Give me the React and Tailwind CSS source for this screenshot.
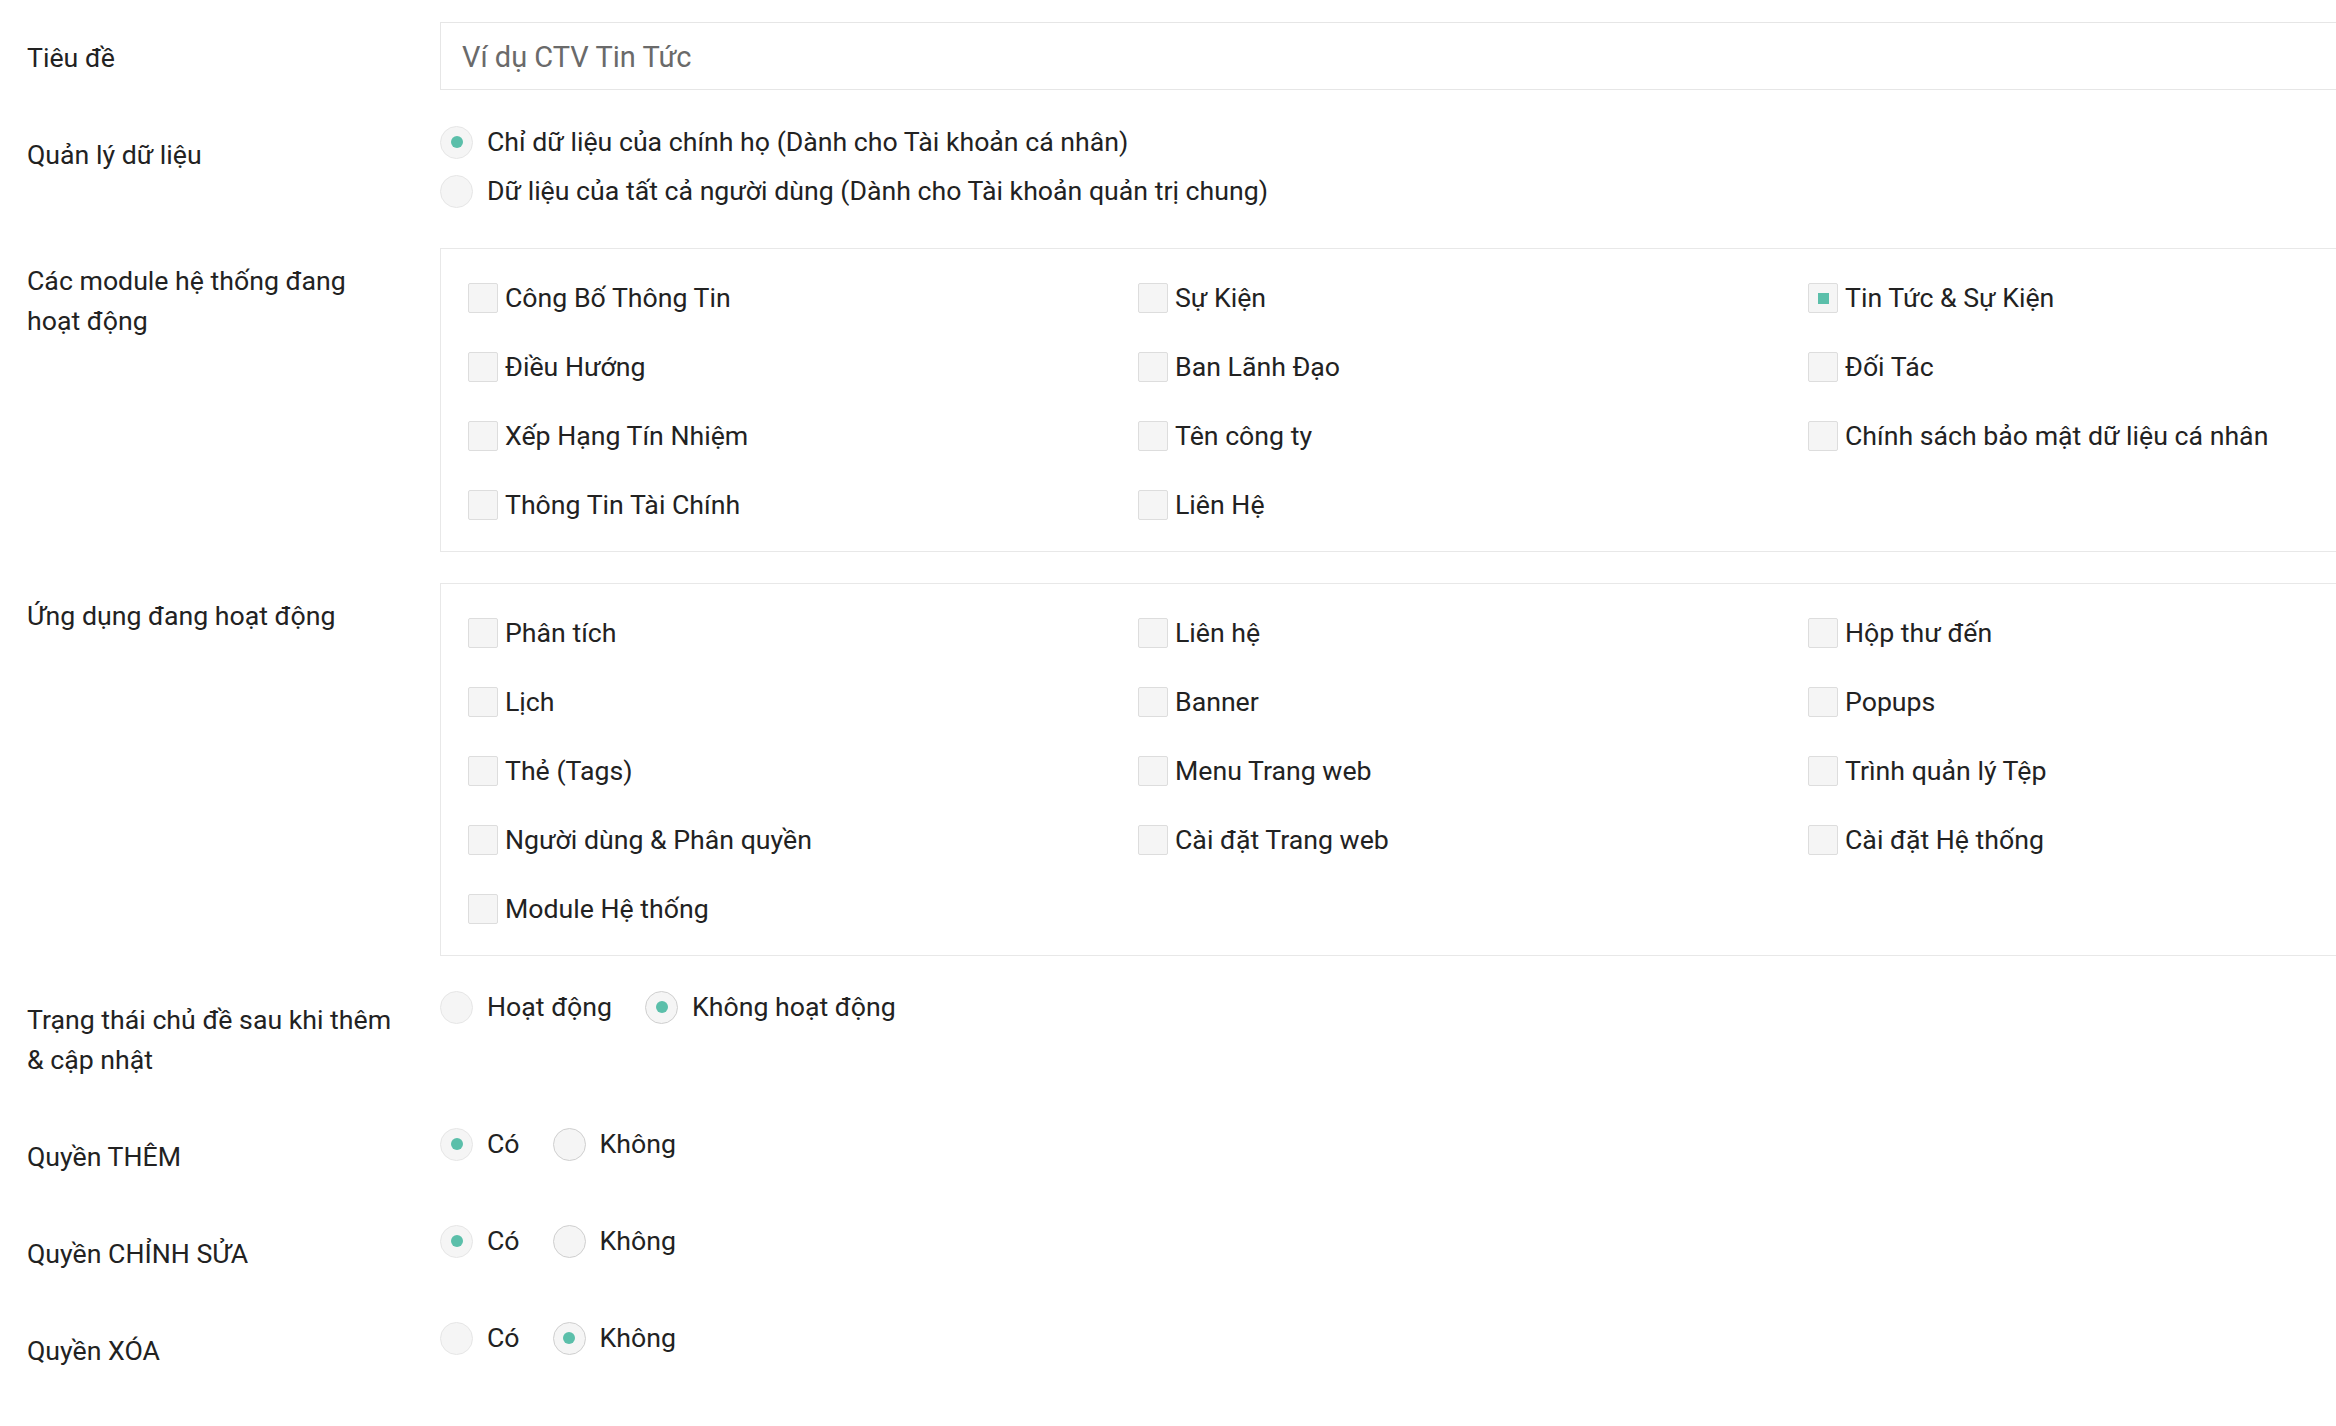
import React from "react";

const Radio = ({ checked, dark }) => (
  <span
    className={`flex h-[33px] w-[33px] shrink-0 items-center justify-center rounded-full border bg-[#f5f5f5] ${
      dark ? "border-[#cfcfcf]" : "border-[#e6e6e6]"
    }`}
  >
    {checked && <span className="h-[12px] w-[12px] rounded-full bg-[#5bbfaa]" />}
  </span>
);

const Check = ({ checked }) => (
  <span className="flex h-[30px] w-[30px] shrink-0 items-center justify-center rounded-[2px] border border-[#dddddd] bg-[#f5f5f5]">
    {checked && <span className="h-[11px] w-[11px] bg-[#5bbfaa]" />}
  </span>
);

const RadioOption = ({ label, checked, dark }) => (
  <label className="flex items-center gap-[14px]">
    <Radio checked={checked} dark={dark} />
    <span>{label}</span>
  </label>
);

const CheckOption = ({ label, checked }) => (
  <label className="flex items-center gap-[7px]">
    <Check checked={checked} />
    <span className="whitespace-nowrap">{label}</span>
  </label>
);

const Row = ({ label, children, labelPad = "pt-[13px]" }) => (
  <div className="flex">
    <div className={`w-[413px] shrink-0 pr-[42px] pb-[13px] ${labelPad}`}>{label}</div>
    <div className="w-[2040px] shrink-0">{children}</div>
  </div>
);

const CheckBox = ({ items }) => (
  <div className="grid grid-cols-[670px_670px_670px] gap-y-[29px] border border-[#e8e8e8] pl-[27px] pt-[29px] pb-[26px]">
    {items.map((it) => (
      <CheckOption key={it.label} label={it.label} checked={it.checked} />
    ))}
  </div>
);

const modules = [
  { label: "Công Bố Thông Tin" },
  { label: "Sự Kiện" },
  { label: "Tin Tức & Sự Kiện", checked: true },
  { label: "Điều Hướng" },
  { label: "Ban Lãnh Đạo" },
  { label: "Đối Tác" },
  { label: "Xếp Hạng Tín Nhiệm" },
  { label: "Tên công ty" },
  { label: "Chính sách bảo mật dữ liệu cá nhân" },
  { label: "Thông Tin Tài Chính" },
  { label: "Liên Hệ" },
];

const apps = [
  { label: "Phân tích" },
  { label: "Liên hệ" },
  { label: "Hộp thư đến" },
  { label: "Lịch" },
  { label: "Banner" },
  { label: "Popups" },
  { label: "Thẻ (Tags)" },
  { label: "Menu Trang web" },
  { label: "Trình quản lý Tệp" },
  { label: "Người dùng & Phân quyền" },
  { label: "Cài đặt Trang web" },
  { label: "Cài đặt Hệ thống" },
  { label: "Module Hệ thống" },
];

const YesNo = ({ yes }) => (
  <div className="flex items-center gap-[33px]">
    <RadioOption label="Có" checked={yes} />
    <RadioOption label="Không" checked={!yes} dark />
  </div>
);

export default function App() {
  return (
    <div className="min-h-[1426px] w-[2336px] overflow-hidden bg-white font-[Roboto,sans-serif] text-[26.7px] leading-[40px] text-[#222222]">
      <div className="flex flex-col gap-[31px] pl-[27px] pt-[22px]">
        <Row label="Tiêu đề" labelPad="pt-[16px]">
          <input
            type="text"
            placeholder="Ví dụ CTV Tin Tức"
            className="h-[68px] w-full border border-[#e6e6e6] bg-white pl-[21px] pt-[2px] text-[29px] text-[#222222] outline-none placeholder:text-[#6a6a6a]"
          />
        </Row>

        <Row label="Quản lý dữ liệu">
          <div className="flex flex-col gap-[9px] pb-[6px]">
            <RadioOption label="Chỉ dữ liệu của chính họ (Dành cho Tài khoản cá nhân)" checked />
            <RadioOption label="Dữ liệu của tất cả người dùng (Dành cho Tài khoản quản trị chung)" />
          </div>
        </Row>

        <Row label="Các module hệ thống đang hoạt động">
          <CheckBox items={modules} />
        </Row>

        <Row label="Ứng dụng đang hoạt động">
          <CheckBox items={apps} />
        </Row>

        <Row label="Trạng thái chủ đề sau khi thêm & cập nhật">
          <div className="flex items-center gap-[33px]">
            <RadioOption label="Hoạt động" />
            <RadioOption label="Không hoạt động" checked dark />
          </div>
        </Row>

        <Row label="Quyền THÊM">
          <YesNo yes />
        </Row>

        <Row label="Quyền CHỈNH SỬA">
          <YesNo yes />
        </Row>

        <Row label="Quyền XÓA">
          <YesNo yes={false} />
        </Row>
      </div>
    </div>
  );
}
